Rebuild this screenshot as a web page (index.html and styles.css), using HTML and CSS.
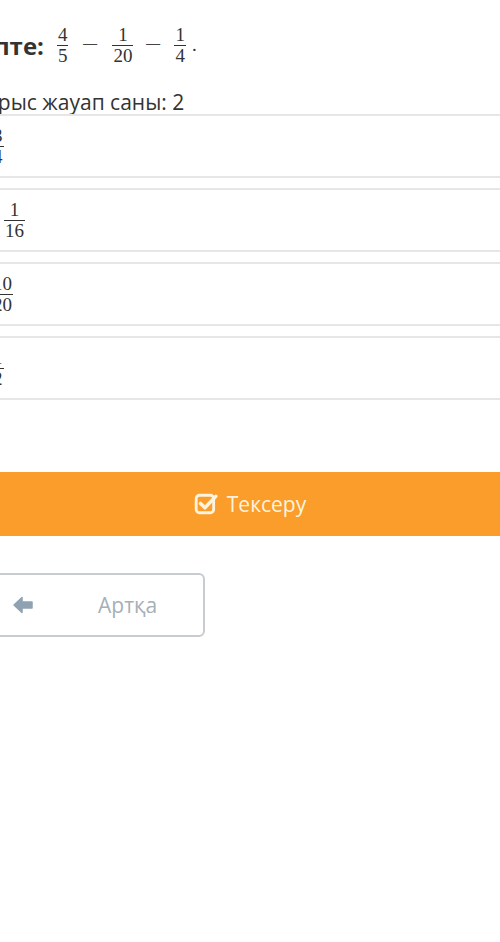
FILE: index.html
```html
<!DOCTYPE html>
<html lang="kk">
<head>
  <meta charset="UTF-8">
  <meta name="viewport" content="width=device-width, initial-scale=1.0">
  <title>Тест</title>
  <link rel="stylesheet" href="styles.css">
</head>
<body>
  <div class="page">
    <div class="question">
      <span class="q-label">Есепте:</span>
      <span class="math">
        <span class="frac"><span class="num">4</span><span class="den">5</span></span>
        <span class="op">−</span>
        <span class="frac"><span class="num">1</span><span class="den">20</span></span>
        <span class="op">−</span>
        <span class="frac"><span class="num">1</span><span class="den">4</span></span>
        <span class="dot">.</span>
      </span>
    </div>

    <p class="hint">Дұрыс жауап саны: 2</p>

    <ul class="options">
      <li class="option">
        <span class="frac"><span class="num">3</span><span class="den">4</span></span>
      </li>
      <li class="option">
        <span class="frac shift"><span class="num">1</span><span class="den">16</span></span>
      </li>
      <li class="option">
        <span class="frac"><span class="num">10</span><span class="den">20</span></span>
      </li>
      <li class="option">
        <span class="frac"><span class="num">1</span><span class="den">2</span></span>
      </li>
    </ul>

    <button class="check-btn">
      <svg width="24" height="24" viewBox="0 0 22 22" fill="none">
        <rect x="2" y="3" width="16" height="16" rx="3" stroke="#fdf3de" stroke-width="2.6"/>
        <path d="M6 10.5 L10 14.5 L20 4" stroke="#fdf3de" stroke-width="3.2" stroke-linecap="round" stroke-linejoin="round"/>
      </svg>
      Тексеру
    </button>

    <button class="back-btn">
      <svg class="back-icon" width="22" height="20" viewBox="0 0 22 20">
        <path d="M2 10 L10 2.5 L10 7 L20 7 L20 13 L10 13 L10 17.5 Z" fill="#8fa2b2" stroke="#8fa2b2" stroke-width="1.5" stroke-linejoin="round"/>
      </svg>
      <span class="back-text">Артқа</span>
    </button>
  </div>
</body>
</html>
```

FILE: styles.css
```css
* {
  margin: 0;
  padding: 0;
  box-sizing: border-box;
}

body {
  background: #fff;
  font-family: 'Open Sans', sans-serif;
  color: #333;
  overflow: hidden;
}

.page {
  margin-left: -38px;
  width: calc(100% + 50px);
}

.question {
  display: flex;
  align-items: center;
  height: 66px;
  padding-top: 24px;
}

.q-label {
  font-weight: 700;
  font-size: 24px;
  color: #333;
  margin-left: -8px;
  margin-right: 13px;
}

.math {
  display: flex;
  align-items: center;
  font-family: 'Liberation Serif', serif;
  color: #333;
}

.frac {
  display: inline-flex;
  flex-direction: column;
  align-items: center;
  font-family: 'Liberation Serif', serif;
  font-size: 19px;
  line-height: 14px;
  color: #333;
}

.num {
  padding: 0 1px 3px;
}

.den {
  border-top: 1px solid #333;
  padding: 3px 1px 0;
  align-self: stretch;
  text-align: center;
}

.op {
  display: inline-block;
  width: 16px;
  margin: 0 14px;
  text-align: center;
  font-family: 'Liberation Serif', serif;
  font-size: 19px;
  color: #444;
  transform: scaleX(1.6);
}

.op + .frac + .op {
  margin: 0 13px 0 12px;
}

.dot {
  font-size: 19px;
  margin-left: 6px;
}

.hint {
  font-size: 21px;
  color: #333;
  margin-top: 24px;
  margin-left: 11px;
  line-height: 24px;
}

.options {
  list-style: none;
  display: flex;
  flex-direction: column;
  gap: 10px;
}

.option {
  display: flex;
  align-items: center;
  height: 64px;
  border: 2px solid #e6e6e6;
  padding-left: 28px;
}

.frac.shift {
  margin-left: 12px;
}

.check-btn {
  display: flex;
  align-items: center;
  justify-content: center;
  gap: 9px;
  width: 100%;
  height: 64px;
  margin-top: 72px;
  padding-left: 26px;
  background: #fa9d2a;
  border: none;
  color: #fdf3de;
  font-family: 'Open Sans', sans-serif;
  font-size: 21px;
}

.back-btn {
  display: flex;
  align-items: center;
  width: 243px;
  height: 64px;
  margin-top: 37px;
  background: #fff;
  border: 2px solid #c8ccd0;
  border-radius: 6px;
  font-family: 'Open Sans', sans-serif;
  font-size: 21px;
  color: #a5afb8;
  padding-left: 48px;
}

.back-text {
  margin-left: 64px;
}
```
